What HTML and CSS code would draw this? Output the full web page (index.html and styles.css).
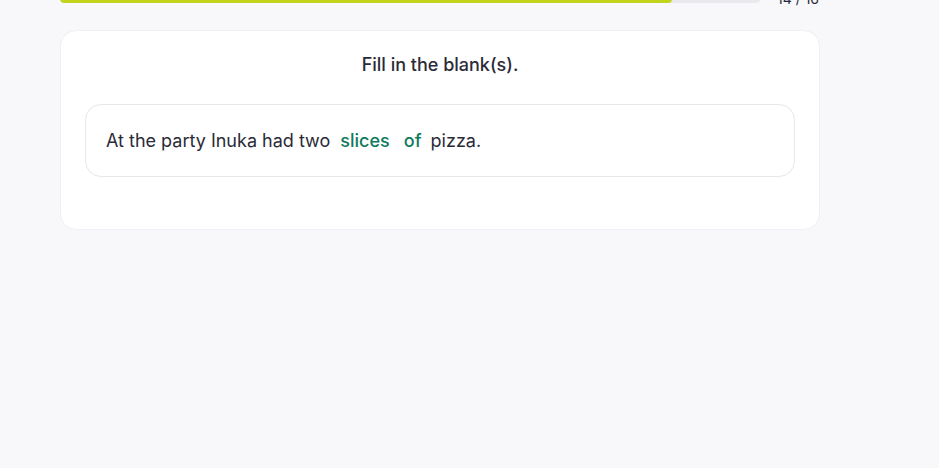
FILE: index.html
```html
<!DOCTYPE html>
<html lang="en">
<head>
<meta charset="utf-8">
<title>Fill in the blank</title>
<link rel="stylesheet" href="styles.css">
</head>
<body>
<main class="page">
  <div class="progress-row">
    <div class="progress-track"><div class="progress-fill" style="width: 87.4%"></div></div>
    <span class="progress-count">14 / 16</span>
  </div>
  <section class="card">
    <h2 class="card-title">Fill in the blank(s).</h2>
    <div class="sentence-box">
      <p class="sentence">At the party Inuka had two <span class="blank">slices</span> <span class="blank">of</span> pizza.</p>
    </div>
  </section>
</main>
</body>
</html>
```
FILE: styles.css
```css
html, body {
  margin: 0;
  padding: 0;
}
body {
  background: #f8f8fa;
  font-family: Inter, "Noto Sans", sans-serif;
  color: #2b2b38;
}
.page {
  width: 760px;
  margin-left: 60px;
  margin-top: -11px;
}
.progress-row {
  display: flex;
  align-items: center;
  gap: 17px;
  height: 20px;
}
.progress-track {
  flex: 0 0 700px;
  height: 8px;
  background: #e9e9ed;
  border-radius: 4px;
  overflow: hidden;
}
.progress-fill {
  height: 100%;
  background: #c2d41c;
  border-radius: 4px;
}
.progress-count {
  font-size: 14px;
  line-height: 20px;
  color: #2b2b38;
  white-space: nowrap;
}
.card {
  margin-top: 21px;
  background: #ffffff;
  border: 1px solid #eef0f3;
  border-radius: 16px;
  padding: 23px 24px 52px;
  box-sizing: border-box;
  height: 200px;
}
.card-title {
  margin: 0;
  font-size: 18px;
  font-weight: 500;
  line-height: 22px;
  text-align: center;
  color: #2b2b38;
}
.sentence-box {
  margin-top: 28px;
  border: 1px solid #e6e7eb;
  border-radius: 16px;
  height: 73px;
  box-sizing: border-box;
  display: flex;
  align-items: center;
  padding: 1px 20px 0;
}
.sentence {
  margin: 0;
  font-size: 18px;
  line-height: 24px;
  color: #2b2b38;
}
.blank {
  color: #0f7a5c;
  font-weight: 500;
  padding: 0 4px 0 5px;
}
```
